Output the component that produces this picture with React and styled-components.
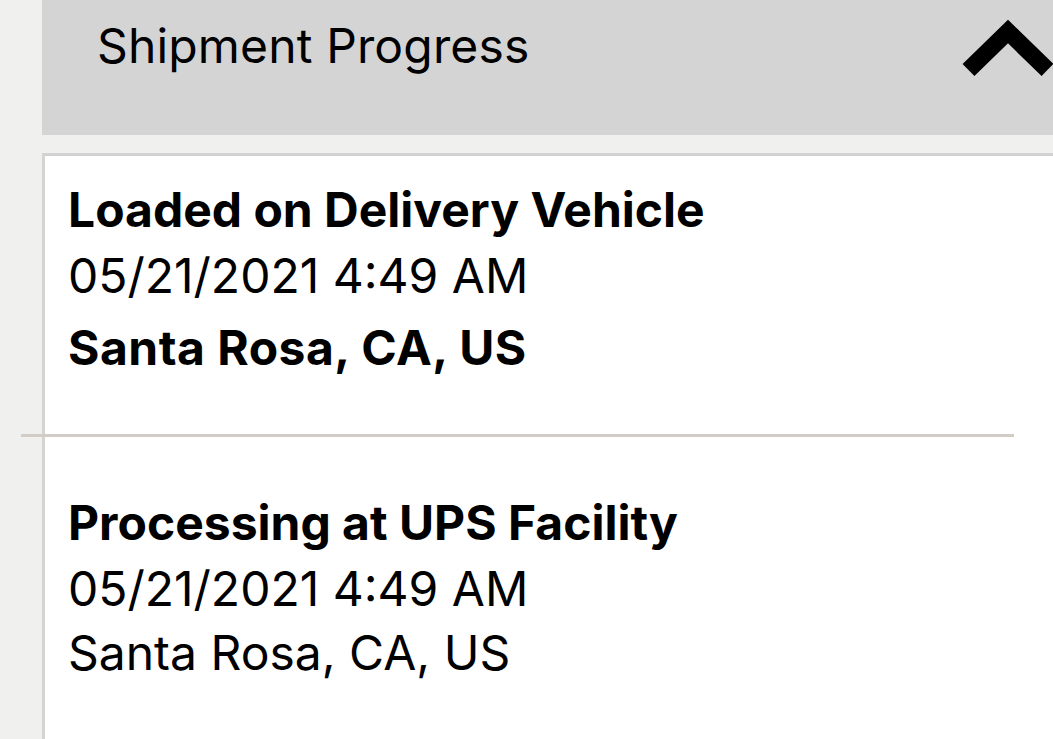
import React from 'react'
import styled, { createGlobalStyle } from 'styled-components'

const events = [
  {
    status: 'Loaded on Delivery Vehicle',
    date: '05/21/2021 4:49 AM',
    location: 'Santa Rosa, CA, US',
    latest: true,
  },
  {
    status: 'Processing at UPS Facility',
    date: '05/21/2021 4:49 AM',
    location: 'Santa Rosa, CA, US',
    latest: false,
  },
]

export default function App() {
  return (
    <>
      <GlobalStyle />
      <Page>
        <Header>
          <Title>Shipment Progress</Title>
          <Chevron viewBox='0 0 93 100' aria-hidden='true'>
            <path d='M8.5 70 L48 31.5 L87.5 70' />
          </Chevron>
        </Header>
        <Card>
          {events.map((e, i) => (
            <React.Fragment key={i}>
              {i > 0 && <Divider />}
              <Event $first={i === 0}>
                <Status>{e.status}</Status>
                <Line>{e.date}</Line>
                <Location $strong={e.latest}>{e.location}</Location>
              </Event>
            </React.Fragment>
          ))}
        </Card>
      </Page>
    </>
  )
}

const GlobalStyle = createGlobalStyle`
  html, body {
    margin: 0;
    padding: 0;
    background: #f0f0ee;
    overflow: hidden;
  }
  body {
    font-family: Inter, "Liberation Sans", sans-serif;
    color: #000;
  }
`

const Page = styled.div`
  width: 1053px;
  height: 739px;
  padding-left: 42px;
  box-sizing: border-box;
  overflow: hidden;
`

const Header = styled.header`
  display: flex;
  justify-content: space-between;
  align-items: flex-start;
  height: 135px;
  background: #d4d4d4;
`

const Title = styled.h2`
  margin: 0;
  padding: 16px 0 0 55px;
  font-size: 48px;
  font-weight: 400;
  line-height: 60px;
  letter-spacing: 0.15px;
`

const Chevron = styled.svg`
  width: 93px;
  height: 100px;
  flex-shrink: 0;
  path {
    fill: none;
    stroke: #000;
    stroke-width: 17;
    stroke-linejoin: miter;
    stroke-linecap: butt;
  }
`

const Card = styled.section`
  margin-top: 18px;
  width: 1100px;
  background: #fff;
  border-top: 3px solid #d2d2d2;
  border-left: 3px solid #d4d4d4;
  padding-left: 23px;
  padding-bottom: 120px;
`

const Event = styled.article`
  padding: ${(p) => (p.$first ? '21px 0 53px' : '53px 0 0')};
`

const Status = styled.h3`
  margin: 0;
  font-size: 48px;
  font-weight: 700;
  line-height: 66px;
`

const Line = styled.p`
  margin: 0;
  font-size: 48px;
  font-weight: 400;
  line-height: 66px;
`

const Location = styled(Line)`
  font-weight: ${(p) => (p.$strong ? 700 : 400)};
  margin-top: ${(p) => (p.$strong ? '6px' : '-2px')};
  letter-spacing: ${(p) => (p.$strong ? '0.5px' : '0')};
`

const Divider = styled.hr`
  margin: 0 0 0 -47px;
  width: 993px;
  height: 3px;
  border: 0;
  background: #d1ccc6;
`
